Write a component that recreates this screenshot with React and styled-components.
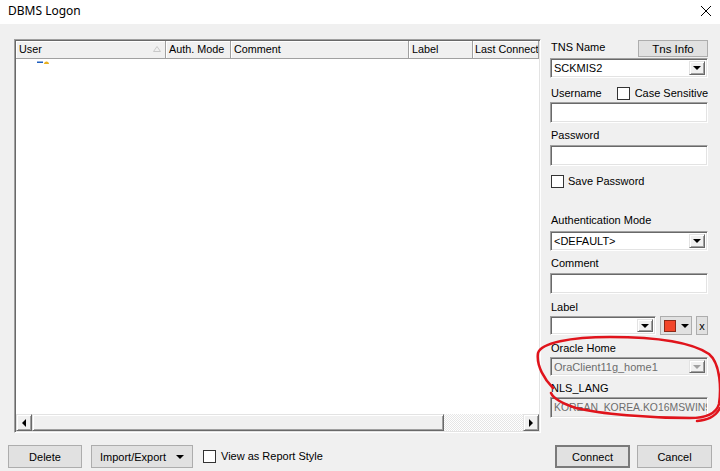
import React from 'react';
import styled, { createGlobalStyle } from 'styled-components';

const GlobalStyle = createGlobalStyle`
  html, body {
    margin: 0;
    padding: 0;
  }
  body {
    font-family: "Liberation Sans", Arial, sans-serif;
    font-size: 11px;
    color: #000;
  }
`;

const Window = styled.div`
  position: relative;
  width: 720px;
  height: 471px;
  background: #f0f0f0;
  display: flex;
  flex-direction: column;
  overflow: hidden;
`;

const TitleBar = styled.div`
  height: 24px;
  flex: none;
  background: #fff;
  display: flex;
  align-items: center;
  justify-content: space-between;
  padding: 0 8px 3px 8px;
  box-sizing: border-box;
  font-family: "Noto Sans", "Liberation Sans", sans-serif;
  font-size: 12px;
`;

const Body = styled.div`
  flex: 1;
  display: flex;
  flex-direction: column;
  padding: 15px 8px 3px 8px;
`;

const Main = styled.div`
  display: flex;
  gap: 9px;
  height: 394px;
  margin: 0 4px 0 6px;
`;

const ListView = styled.div`
  width: 527px;
  box-sizing: border-box;
  display: flex;
  flex-direction: column;
  border: 1px solid;
  border-color: #a0a0a0 #fff #fff #a0a0a0;
  box-shadow: inset 1px 1px 0 #696969, inset -1px -1px 0 #e3e3e3;
  padding: 1px;
  background: #fff;
`;

const Header = styled.div`
  display: flex;
  height: 17px;
  flex: none;
  background: #f0f0f0;
  border-bottom: 1px solid #a0a0a0;
  overflow: hidden;
`;

const HeaderCell = styled.div`
  position: relative;
  flex: ${p => (p.$w ? `0 0 ${p.$w}px` : '1')};
  box-sizing: border-box;
  padding-left: 3px;
  line-height: 16px;
  font-size: 10.8px;
  border-right: 1px solid #a0a0a0;
  box-shadow: inset 1px 1px 0 #fff;
  white-space: nowrap;
  overflow: hidden;
`;

const SortMark = styled.svg`
  position: absolute;
  right: 4px;
  top: 5px;
`;

const ListBody = styled.div`
  flex: 1;
  padding: 1px 0 0 21px;
`;

const RowIcon = styled.svg`
  display: block;
`;

const ScrollBar = styled.div`
  display: flex;
  height: 17px;
  flex: none;
  background: #f0f0f0;
`;

const ScrollButton = styled.div`
  width: 16px;
  box-sizing: border-box;
  display: flex;
  align-items: center;
  justify-content: center;
  background: #f0f0f0;
  border: 1px solid;
  border-color: #e3e3e3 #696969 #696969 #e3e3e3;
  box-shadow: inset 1px 1px 0 #fff, inset -1px -1px 0 #a0a0a0;
`;

const Thumb = styled(ScrollButton)`
  width: ${p => p.$w}px;
`;

const Track = styled.div`
  flex: 1;
  background-image: repeating-conic-gradient(#fff 0 25%, #e6e6e6 0 50%);
  background-size: 2px 2px;
`;

const Arrow = styled.span`
  width: 0;
  height: 0;
  border-style: solid;
  border-color: transparent;
  ${p =>
    p.$dir === 'left'
      ? 'border-width: 4px 4px 4px 0; border-right-color: #000;'
      : p.$dir === 'right'
      ? 'border-width: 4px 0 4px 4px; border-left-color: #000;'
      : `border-width: 4px 4px 0 4px; border-top-color: ${p.$muted ? '#a0a0a0' : '#000'};`}
`;

const Side = styled.div`
  width: 158px;
  display: flex;
  flex-direction: column;
`;

const TopRow = styled.div`
  display: flex;
  justify-content: space-between;
  height: 17px;
  margin-top: ${p => p.$top || 0}px;
`;

const FieldLabel = styled.div`
  height: 13px;
  line-height: 13px;
  margin-top: ${p => p.$top || 0}px;
  padding-left: 1px;
  white-space: nowrap;
`;

const CheckRow = styled.label`
  display: flex;
  align-items: center;
  gap: ${p => p.$gap || 5}px;
  height: 13px;
  line-height: 13px;
  margin-top: ${p => p.$top || 0}px;
  white-space: nowrap;
`;

const CheckBox = styled.span`
  width: 13px;
  height: 13px;
  box-sizing: border-box;
  border: 1px solid #333;
  background: #fff;
  flex: none;
`;

const Sunken = styled.div`
  box-sizing: border-box;
  height: ${p => p.$h || 21}px;
  width: ${p => (p.$w ? `${p.$w}px` : 'auto')};
  margin-top: ${p => p.$top || 0}px;
  border: 1px solid;
  border-color: #a0a0a0 #fff #fff #a0a0a0;
  box-shadow: inset 1px 1px 0 #696969, inset -1px -1px 0 #e3e3e3;
  background: ${p => (p.$disabled ? '#f0f0f0' : '#fff')};
  color: ${p => (p.$disabled ? '#6d6d6d' : '#000')};
  display: flex;
  align-items: stretch;
  padding: ${p => (p.$open ? '2px 0 2px 2px' : '2px')};
  overflow: hidden;
`;

const ComboText = styled.div`
  flex: 1;
  padding-left: 1px;
  display: flex;
  align-items: center;
  white-space: nowrap;
  overflow: hidden;
  font-size: ${p => p.$fs || 11}px;
`;

const DropButton = styled(ScrollButton)`
  width: 16px;
`;

const LabelRow = styled.div`
  display: flex;
  gap: 4px;
  height: 19px;
  margin-top: ${p => p.$top || 0}px;
`;

const Button = styled.button`
  box-sizing: border-box;
  width: ${p => p.$w}px;
  height: ${p => p.$h || 23}px;
  padding: 0;
  background: #e1e1e1;
  border: 1px solid ${p => (p.$default ? '#7a7a7a' : '#adadad')};
  box-shadow: ${p => (p.$default ? 'inset 0 0 0 1px #7a7a7a' : 'none')};
  font-family: "Liberation Sans", Arial, sans-serif;
  font-size: ${p => p.$fs || 11}px;
  color: #000;
  display: flex;
  align-items: center;
  justify-content: center;
  gap: 10px;
`;

const ColorButton = styled(Button)`
  gap: 5px;
  padding-left: 1px;
`;

const Swatch = styled.span`
  width: 12px;
  height: 12px;
  box-sizing: border-box;
  background: #f2452a;
  border: 1px solid #8a2a1a;
`;

const Footer = styled.div`
  display: flex;
  align-items: center;
  height: 23px;
  margin-top: 12px;
`;

const Spacer = styled.div`
  flex: 1;
`;

const Annotation = styled.svg`
  position: absolute;
  left: 0;
  top: 0;
  pointer-events: none;
`;

function Combo({ value, disabled, w, h = 20, top }) {
  return (
    <Sunken $h={h} $w={w} $top={top} $disabled={disabled}>
      <ComboText>{value}</ComboText>
      <DropButton>
        <Arrow $muted={disabled} />
      </DropButton>
    </Sunken>
  );
}

export default function App() {
  return (
    <Window>
      <GlobalStyle />
      <TitleBar>
        <span>DBMS Logon</span>
        <svg width="12" height="12" viewBox="0 0 12 12">
          <path d="M1 1L11 11M11 1L1 11" stroke="#000" strokeWidth="1" />
        </svg>
      </TitleBar>
      <Body>
        <Main>
          <ListView>
            <Header>
              <HeaderCell $w={150}>
                User
                <SortMark width="8" height="6" viewBox="0 0 8 6">
                  <path d="M0.5 5.5L4 0.5L7.5 5.5Z" fill="none" stroke="#c8c8c8" />
                </SortMark>
              </HeaderCell>
              <HeaderCell $w={65}>Auth. Mode</HeaderCell>
              <HeaderCell $w={178}>Comment</HeaderCell>
              <HeaderCell $w={64}>Label</HeaderCell>
              <HeaderCell style={{ paddingLeft: 2 }}>Last Connect</HeaderCell>
            </Header>
            <ListBody>
              <RowIcon width="14" height="4" viewBox="0 0 14 4">
                <rect x="0" y="1.5" width="6" height="1.5" fill="#1f5fbf" />
                <path d="M7 4C7 0.5 12 0.5 12 4Z" fill="#e8b020" />
              </RowIcon>
            </ListBody>
            <ScrollBar>
              <ScrollButton>
                <Arrow $dir="left" />
              </ScrollButton>
              <Thumb $w={412} />
              <Track />
              <ScrollButton>
                <Arrow $dir="right" />
              </ScrollButton>
            </ScrollBar>
          </ListView>

          <Side>
            <TopRow $top={1}>
              <FieldLabel $top={1}>TNS Name</FieldLabel>
              <Button $w={70} $h={17} $fs={11.5}>Tns Info</Button>
            </TopRow>
            <Combo value="SCKMIS2" top={1} />
            <CheckRow $top={9} $gap={5}>
              <FieldLabel>Username</FieldLabel>
              <span style={{ width: 14 }} />
              <CheckBox />
              Case Sensitive
            </CheckRow>
            <Sunken $top={2} />
            <FieldLabel $top={6}>Password</FieldLabel>
            <Sunken $top={3} />
            <CheckRow $top={9} $gap={4}>
              <CheckBox style={{ marginLeft: 1 }} />
              Save Password
            </CheckRow>
            <FieldLabel $top={26}>Authentication Mode</FieldLabel>
            <Combo value="<DEFAULT>" top={4} />
            <FieldLabel $top={6}>Comment</FieldLabel>
            <Sunken $top={3} />
            <FieldLabel $top={7}>Label</FieldLabel>
            <LabelRow $top={2}>
              <Combo value="" w={107} h={19} />
              <ColorButton $w={32} $h={19}>
                <Swatch />
                <Arrow />
              </ColorButton>
              <Button $w={12} $h={19} $fs={11}>x</Button>
            </LabelRow>
            <FieldLabel $top={7}>Oracle Home</FieldLabel>
            <Combo value="OraClient11g_home1" disabled h={19} top={2} />
            <FieldLabel $top={6}>NLS_LANG</FieldLabel>
            <Sunken $top={2} $disabled $open>
              <ComboText $fs={10.4}>KOREAN_KOREA.KO16MSWIN949</ComboText>
            </Sunken>
          </Side>
        </Main>

        <Footer>
          <Button $w={74}>Delete</Button>
          <Button $w={102} style={{ marginLeft: 9 }}>
            Import/Export
            <Arrow />
          </Button>
          <CheckRow style={{ marginLeft: 10 }}>
            <CheckBox />
            View as Report Style
          </CheckRow>
          <Spacer />
          <Button $w={75} $default>Connect</Button>
          <Button $w={75} style={{ marginLeft: 7 }}>Cancel</Button>
        </Footer>
      </Body>

      <Annotation width="720" height="471" viewBox="0 0 720 471">
        <path
          d="M553 388 C545 380 536 366 538 353 C541 343 570 337 610 337 C650 337 690 341 709 354 C721 364 721 390 719 404 C716 414 705 418 690 418 C650 418 600 414 576 408 C561 403 553 398 551 393"
          fill="none"
          stroke="#e0141c"
          strokeWidth="2.5"
          strokeLinecap="round"
        />
        <path
          d="M697 421 C706 420 715 418 720 408"
          fill="none"
          stroke="#e0141c"
          strokeWidth="2.5"
          strokeLinecap="round"
        />
      </Annotation>
    </Window>
  );
}
